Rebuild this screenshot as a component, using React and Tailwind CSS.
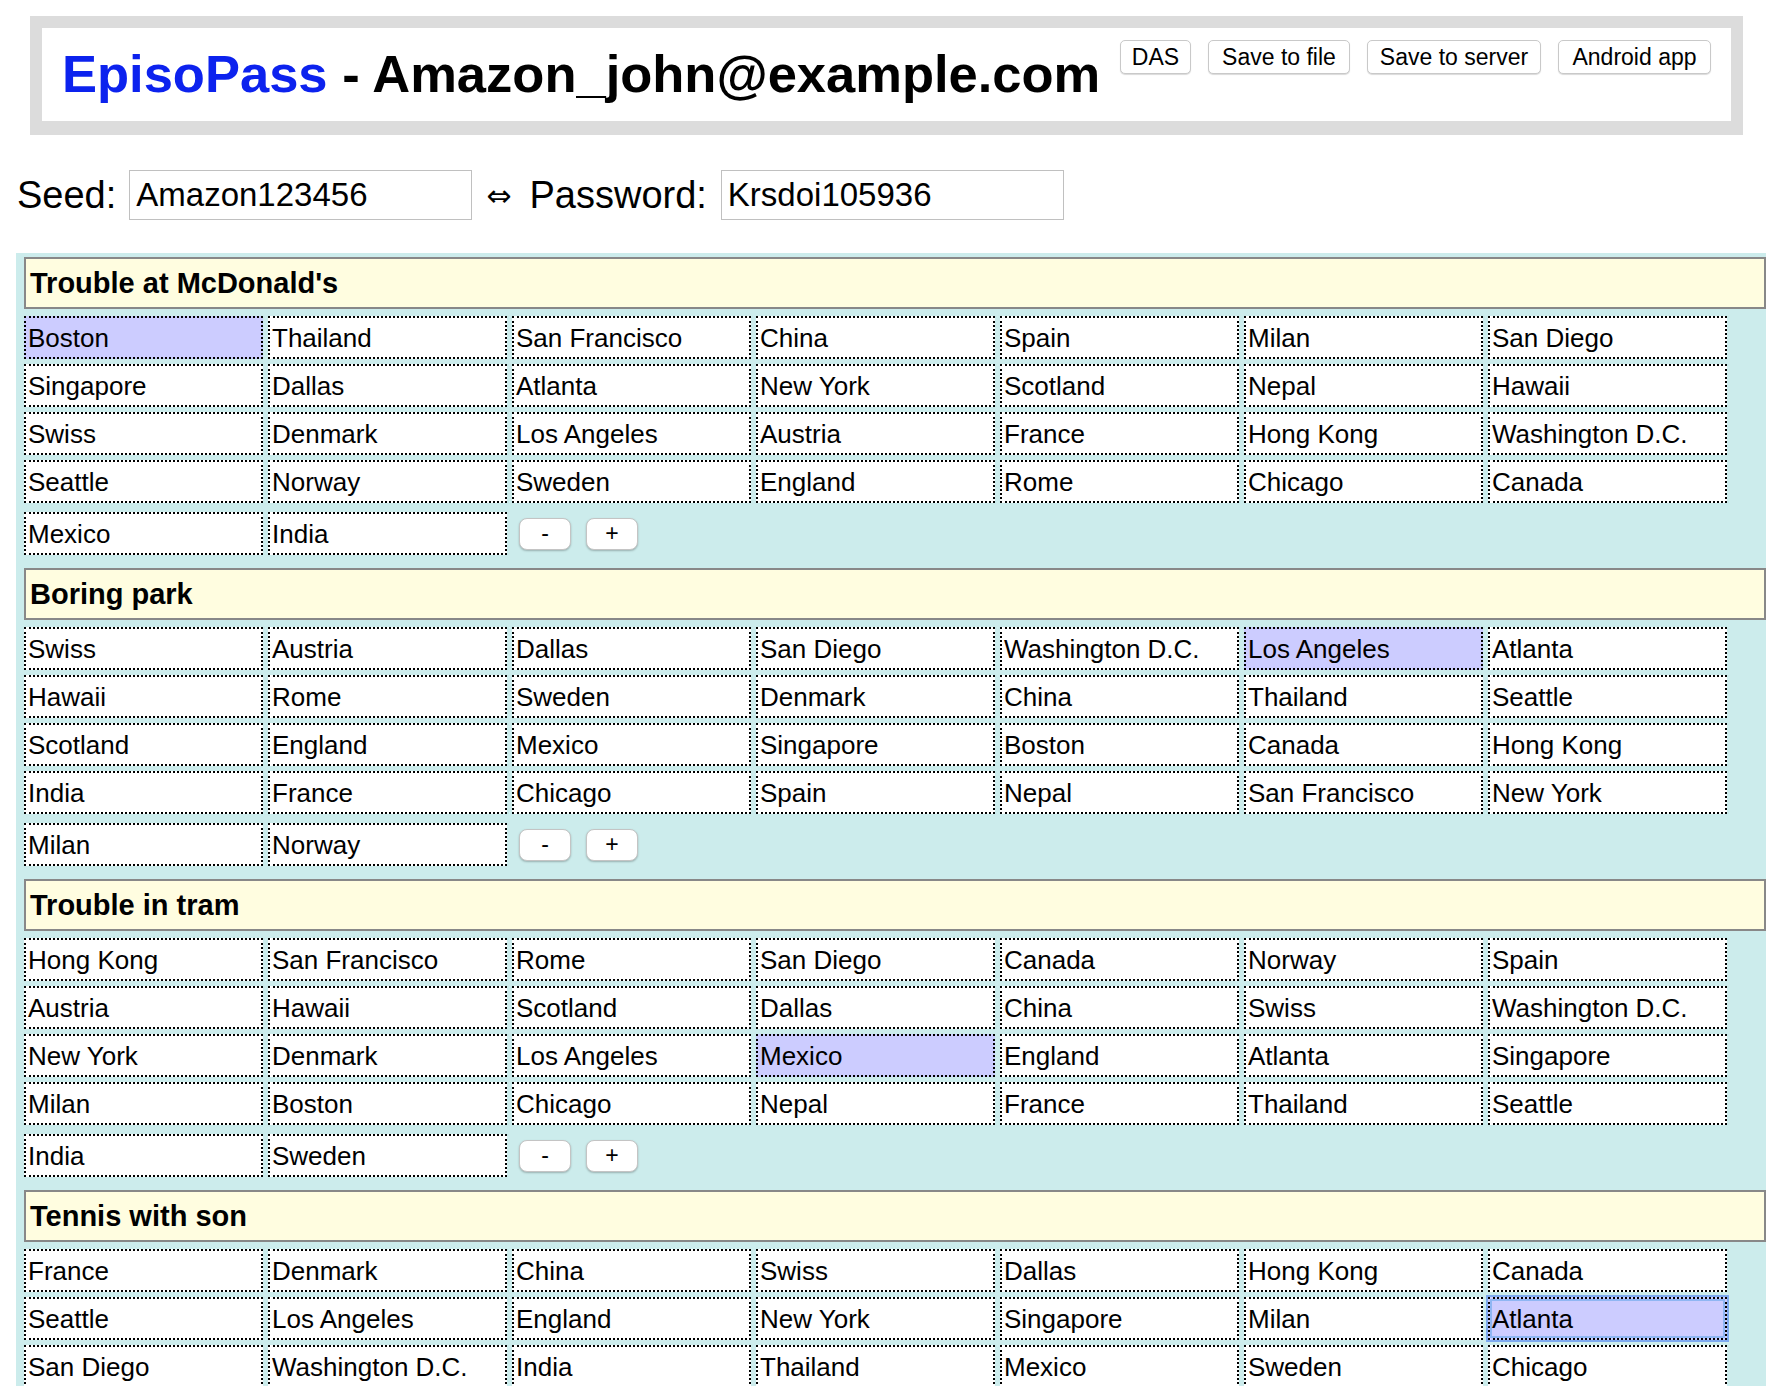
// EpisoPass seed/password editor page
import React from 'react';

const SECTIONS = [
  {
    title: "Trouble at McDonald's",
    rows: [
      ['Boston', 'Thailand', 'San Francisco', 'China', 'Spain', 'Milan', 'San Diego'],
      ['Singapore', 'Dallas', 'Atlanta', 'New York', 'Scotland', 'Nepal', 'Hawaii'],
      ['Swiss', 'Denmark', 'Los Angeles', 'Austria', 'France', 'Hong Kong', 'Washington D.C.'],
      ['Seattle', 'Norway', 'Sweden', 'England', 'Rome', 'Chicago', 'Canada'],
    ],
    last: ['Mexico', 'India'],
    selected: 'Boston',
  },
  {
    title: 'Boring park',
    rows: [
      ['Swiss', 'Austria', 'Dallas', 'San Diego', 'Washington D.C.', 'Los Angeles', 'Atlanta'],
      ['Hawaii', 'Rome', 'Sweden', 'Denmark', 'China', 'Thailand', 'Seattle'],
      ['Scotland', 'England', 'Mexico', 'Singapore', 'Boston', 'Canada', 'Hong Kong'],
      ['India', 'France', 'Chicago', 'Spain', 'Nepal', 'San Francisco', 'New York'],
    ],
    last: ['Milan', 'Norway'],
    selected: 'Los Angeles',
  },
  {
    title: 'Trouble in tram',
    rows: [
      ['Hong Kong', 'San Francisco', 'Rome', 'San Diego', 'Canada', 'Norway', 'Spain'],
      ['Austria', 'Hawaii', 'Scotland', 'Dallas', 'China', 'Swiss', 'Washington D.C.'],
      ['New York', 'Denmark', 'Los Angeles', 'Mexico', 'England', 'Atlanta', 'Singapore'],
      ['Milan', 'Boston', 'Chicago', 'Nepal', 'France', 'Thailand', 'Seattle'],
    ],
    last: ['India', 'Sweden'],
    selected: 'Mexico',
  },
  {
    title: 'Tennis with son',
    rows: [
      ['France', 'Denmark', 'China', 'Swiss', 'Dallas', 'Hong Kong', 'Canada'],
      ['Seattle', 'Los Angeles', 'England', 'New York', 'Singapore', 'Milan', 'Atlanta'],
      ['San Diego', 'Washington D.C.', 'India', 'Thailand', 'Mexico', 'Sweden', 'Chicago'],
      ['Boston', 'San Francisco', 'Spain', 'Scotland', 'Nepal', 'Hawaii', 'Austria'],
    ],
    last: ['Norway', 'Rome'],
    selected: 'Atlanta',
    focused: true,
  },
];

function Cell({ name, selected, focused }) {
  return (
    <div
      className={`h-[43px] w-[239px] shrink-0 border-2 border-dotted border-black px-[2px] text-[26px] leading-[40px] whitespace-nowrap overflow-hidden ${
        selected ? 'bg-[#ccccff]' : 'bg-white'
      } ${focused ? 'shadow-[0_0_0_2px_#7eaaf0,inset_0_0_0_2px_#8fb6f3]' : ''}`}
    >
      {name}
    </div>
  );
}

function Section({ section }) {
  return (
    <div className="flex flex-col mb-[13px]">
      <div className="h-[52px] border-2 border-[#888888] bg-[#fffde0] px-[4px] text-[29px] font-bold leading-[48px]">
        {section.title}
      </div>

      {/* Answer grid */}
      <div className="mt-[7px] flex flex-col gap-[5px]">
        {section.rows.map((row, i) => (
          <div key={i} className="flex gap-[5px]">
            {row.map((name) => (
              <Cell
                key={name}
                name={name}
                selected={name === section.selected}
                focused={section.focused && name === section.selected}
              />
            ))}
          </div>
        ))}
      </div>

      <div className="mt-[9px] flex items-center gap-[5px]">
        {section.last.map((name) => (
          <Cell key={name} name={name} selected={name === section.selected} />
        ))}
        <div className="ml-[7px] flex gap-[15px]">
          <button className="h-[32px] w-[52px] rounded-[8px] border border-[#c4c4c4] bg-white text-[23px] leading-none shadow-[0_1px_2px_rgba(0,0,0,0.25)]">
            -
          </button>
          <button className="h-[32px] w-[52px] rounded-[8px] border border-[#c4c4c4] bg-white text-[23px] leading-none shadow-[0_1px_2px_rgba(0,0,0,0.25)]">
            +
          </button>
        </div>
      </div>
    </div>
  );
}

export default function App() {
  const topButton =
    'h-[34px] rounded-[5px] border border-[#c9c9c9] bg-white text-[23px] leading-none shadow-[0_1px_1px_rgba(0,0,0,0.15)]';

  return (
    <div className="h-[1386px] overflow-hidden bg-white text-black font-['Liberation_Sans',Arial,sans-serif]">
      {/* Header */}
      <div className="ml-[30px] mt-[16px] w-[1713px] bg-[#dcdcdc] p-[12px] pb-[14px]">
        <div className="flex h-[93px] items-start justify-between bg-white pl-[20px] pr-[20px] pt-[12px]">
          <div className="pt-[5px] text-[52.5px] font-bold leading-[58px] whitespace-nowrap">
            <span className="text-[#0c22ee]">EpisoPass</span> - Amazon_john@example.com
          </div>
          <div className="flex gap-[17px]">
            <button className={`${topButton} w-[71px]`}>DAS</button>
            <button className={`${topButton} w-[142px]`}>Save to file</button>
            <button className={`${topButton} w-[174px]`}>Save to server</button>
            <button className={`${topButton} w-[153px]`}>Android app</button>
          </div>
        </div>
      </div>

      {/* Seed / password */}
      <div className="mt-[35px] flex h-[50px] items-center pl-[17px] text-[38px]">
        <span>Seed:</span>
        <div className="ml-[13px] h-[50px] w-[343px] border border-[#c0c0c0] px-[6px] text-[33px] leading-[48px]">
          Amazon123456
        </div>
        <span className="ml-[14px] font-['DejaVu_Sans',sans-serif] text-[30px]">⇔</span>
        <span className="ml-[18px]">Password:</span>
        <div className="ml-[14px] h-[50px] w-[343px] border border-[#c0c0c0] px-[6px] text-[33px] leading-[48px]">
          Krsdoi105936
        </div>
      </div>

      {/* Questions */}
      <div className="ml-[16px] mt-[33px] w-[1750px] bg-[#ccecec] pl-[8px] pt-[4px]">
        {SECTIONS.map((s) => (
          <Section key={s.title} section={s} />
        ))}
      </div>
    </div>
  );
}
